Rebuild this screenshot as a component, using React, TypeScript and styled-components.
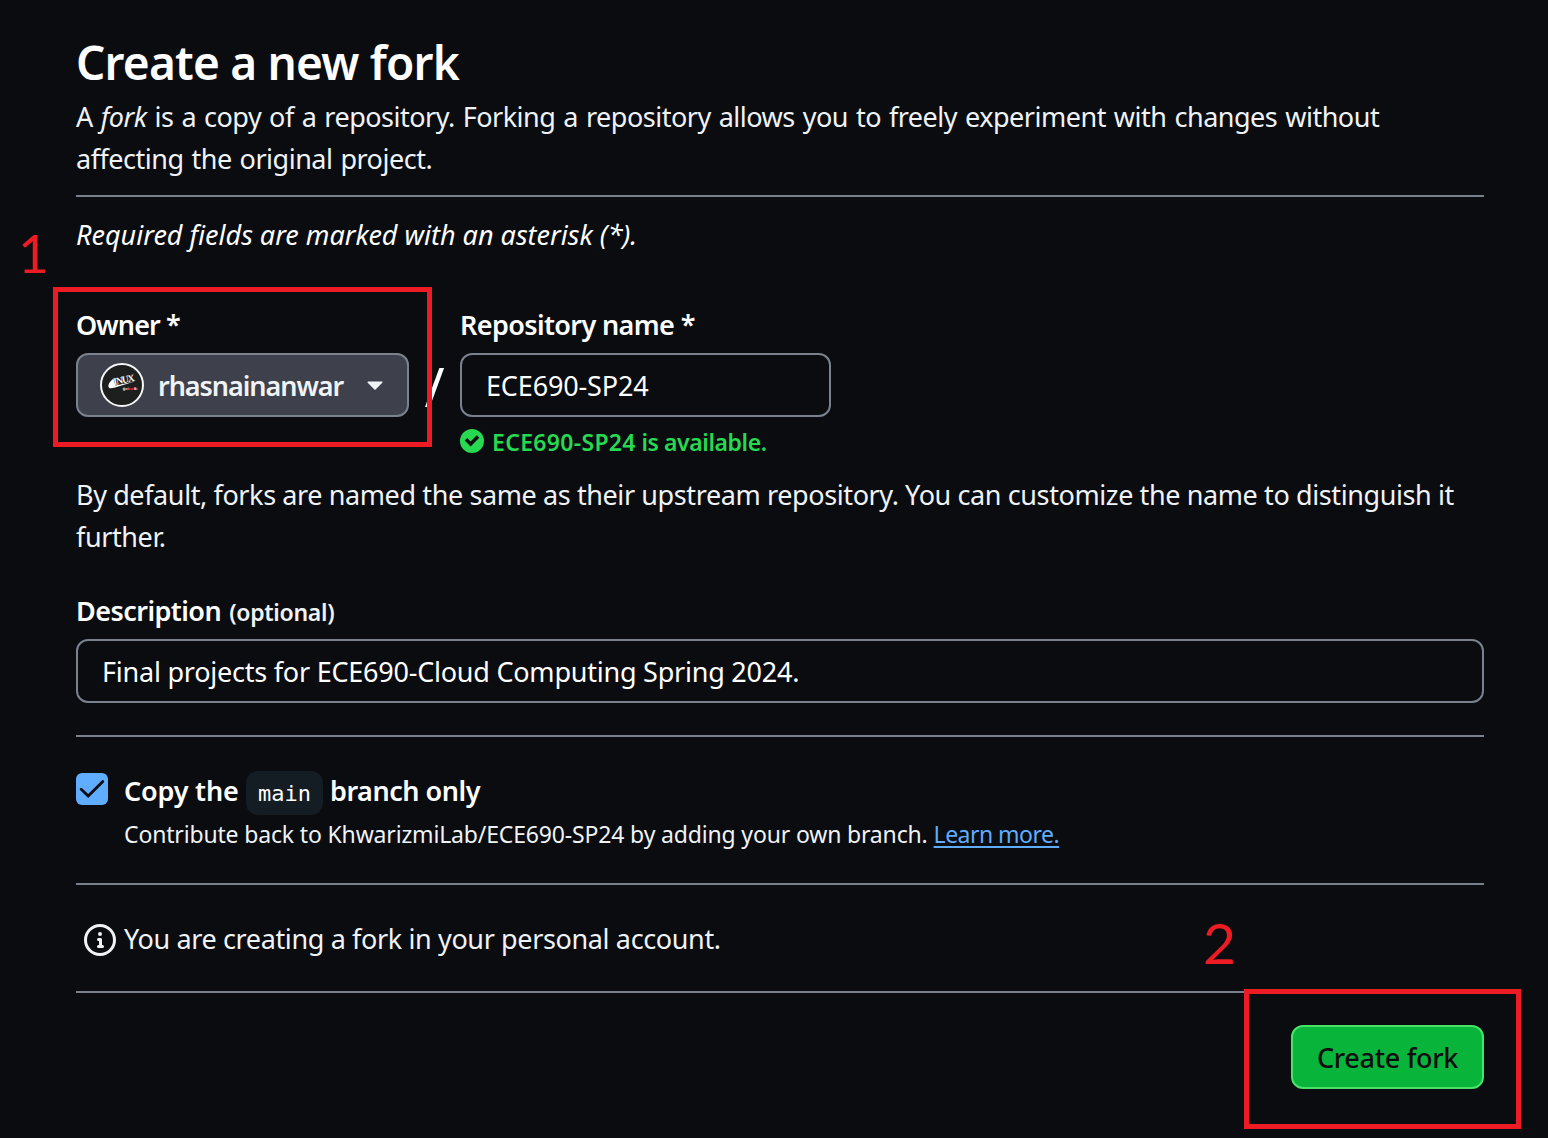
import React from 'react';
import styled, { createGlobalStyle } from 'styled-components';

const color = {
  canvas: '#0a0c10',
  text: '#f0f3f6',
  strong: '#ffffff',
  border: '#7a828e',
  owner: '#3e414b',
  success: '#26d950',
  primary: '#09b43a',
  primaryBorder: '#4ae168',
  link: '#60adff',
  code: '#141c24',
  mark: '#ed1c24',
};

const GlobalStyle = createGlobalStyle`
  *, *::before, *::after { box-sizing: border-box; }
  body {
    margin: 0;
    background: ${color.canvas};
    color: ${color.text};
    font-family: 'Noto Sans', 'Open Sans', sans-serif;
  }
`;

const Page = styled.main`
  position: relative;
  width: 1548px;
  height: 1138px;
  padding: 27px 64px 0 76px;
  overflow: hidden;
  background: ${color.canvas};
`;

const Title = styled.h1`
  margin: 0;
  font-size: 46px;
  font-weight: 600;
  line-height: 70px;
  letter-spacing: -0.8px;
  color: ${color.strong};
`;

const Paragraph = styled.p<{ $track?: number; $word?: number; $top?: number }>`
  margin: ${(p) => p.$top ?? 0}px 0 0;
  font-size: 27px;
  line-height: 42px;
  letter-spacing: ${(p) => p.$track ?? 0}px;
  word-spacing: ${(p) => p.$word ?? 0}px;
`;

const RequiredNote = styled(Paragraph)`
  font-style: italic;
  color: ${color.strong};
`;

const Divider = styled.hr<{ $top: number; $bottom: number }>`
  height: 2px;
  margin: ${(p) => p.$top}px 0 ${(p) => p.$bottom}px;
  border: 0;
  background: ${color.border};
`;

const FieldRow = styled.div`
  display: flex;
  align-items: flex-start;
  margin-top: 48px;
`;

const Field = styled.div<{ $width?: number; $top?: number }>`
  display: flex;
  flex-direction: column;
  width: ${(p) => (p.$width ? `${p.$width}px` : '100%')};
  margin-top: ${(p) => p.$top ?? 0}px;
`;

const Label = styled.label<{ $track: number; $gap?: number }>`
  display: flex;
  align-items: baseline;
  gap: 8px;
  margin-bottom: ${(p) => p.$gap ?? 7}px;
  font-size: 27px;
  font-weight: 600;
  line-height: 42px;
  letter-spacing: ${(p) => p.$track}px;
  white-space: nowrap;
  color: ${color.strong};
`;

const Optional = styled.span`
  font-size: 23px;
  letter-spacing: -0.3px;
  color: ${color.text};
`;

const OwnerButton = styled.button`
  display: flex;
  align-items: center;
  width: 333px;
  height: 64px;
  padding: 0 24px 0 22px;
  border: 2px solid ${color.border};
  border-radius: 12px;
  background: ${color.owner};
  color: ${color.text};
  font: 600 27px 'Noto Sans', 'Open Sans', sans-serif;
  letter-spacing: -1.05px;
`;

const OwnerName = styled.span`
  flex: 1;
  margin-left: 14px;
  text-align: left;
`;

const Separator = styled.span`
  display: flex;
  align-items: center;
  justify-content: center;
  width: 51px;
  height: 64px;
  margin-top: 50px;
  font-size: 54px;
  line-height: 64px;
  color: ${color.strong};
`;

const TextInput = styled.input<{ $track: number }>`
  width: 100%;
  height: 64px;
  padding: 0 22px 0 24px;
  border: 2px solid ${color.border};
  border-radius: 12px;
  outline: none;
  background: ${color.canvas};
  color: ${color.strong};
  font: 400 27px 'Noto Sans', 'Open Sans', sans-serif;
  letter-spacing: ${(p) => p.$track}px;
`;

const Availability = styled.div`
  display: flex;
  align-items: center;
  gap: 8px;
  height: 36px;
  margin-top: 7px;
  font-size: 23px;
  font-weight: 600;
  line-height: 36px;
  letter-spacing: -0.4px;
  white-space: nowrap;
  color: ${color.success};

  svg {
    position: relative;
    top: -1px;
  }
`;

const AvailableName = styled.span`
  letter-spacing: 0.32px;
`;

const BranchOption = styled.div`
  display: flex;
  gap: 16px;
  height: 146px;
  padding-top: 32px;
`;

const Checkbox = styled.span`
  display: flex;
  width: 32px;
  height: 32px;
  margin-top: 4px;
  border-radius: 6px;
  background: ${color.link};
`;

const BranchTitle = styled.div`
  display: flex;
  height: 47px;
  font-size: 27px;
  font-weight: 600;
  line-height: 43px;
  white-space: nowrap;
  color: ${color.strong};
`;

const BranchWords = styled.span<{ $track: number; $width?: number }>`
  width: ${(p) => (p.$width ? `${p.$width}px` : 'auto')};
  letter-spacing: ${(p) => p.$track}px;
`;

const BranchName = styled.code`
  width: 77px;
  height: 44px;
  margin: 2px 7px 0 0;
  border-radius: 12px;
  background: ${color.code};
  font: 400 22px/45px 'DejaVu Sans Mono', monospace;
  text-align: center;
`;

const BranchHint = styled.div`
  display: flex;
  gap: 6px;
  font-size: 23px;
  line-height: 36px;
  letter-spacing: -0.16px;
  white-space: nowrap;
`;

const Link = styled.a`
  color: ${color.link};
  letter-spacing: -0.52px;
  text-decoration: underline;
  text-decoration-thickness: 2px;
  text-underline-offset: 3px;
`;

const AccountNote = styled.div`
  display: flex;
  align-items: center;
  gap: 8px;
  height: 42px;
  padding-left: 8px;
  margin-top: 34px;
  font-size: 27px;
  line-height: 42px;
  letter-spacing: -0.37px;
  white-space: nowrap;
`;

const NoteText = styled.span`
  height: 44px;
`;

const Actions = styled.div`
  display: flex;
  justify-content: flex-end;
`;

const CreateButton = styled.button`
  width: 193px;
  height: 64px;
  padding: 0;
  border: 2px solid ${color.primaryBorder};
  border-radius: 12px;
  background: ${color.primary};
  color: ${color.canvas};
  font: 500 27px 'Noto Sans', 'Open Sans', sans-serif;
  letter-spacing: -0.3px;
`;

const Highlight = styled.div<{ $x: number; $y: number; $w: number; $h: number }>`
  position: absolute;
  left: ${(p) => p.$x}px;
  top: ${(p) => p.$y}px;
  width: ${(p) => p.$w}px;
  height: ${(p) => p.$h}px;
  border: 5px solid ${color.mark};
`;

const Step = styled.span<{ $x: number; $y: number; $size: number }>`
  position: absolute;
  left: ${(p) => p.$x}px;
  top: ${(p) => p.$y}px;
  font: 400 ${(p) => p.$size}px/60px Lato, sans-serif;
  color: ${color.mark};
`;

const Avatar = () => (
  <svg width="44" height="44" viewBox="0 0 44 44" aria-hidden="true">
    <circle cx="22" cy="22" r="21" fill="#1c1f1d" stroke="#f4f6f8" strokeWidth="2" />
    <path d="M13.4 15.8c-2.8 2-5.5 5.4-4.9 8 .5 2 3 1.8 6.5.7L34.6 18.6 15.4 22.4z" fill="#fff" />
    <text
      x="14"
      y="22"
      transform="rotate(-11 14 22)"
      fill="#fff"
      fontFamily="'Liberation Serif', serif"
      fontWeight="700"
      fontSize="10"
      textLength="20.5"
      lengthAdjust="spacingAndGlyphs"
    >
      INUX
    </text>
    <text
      x="23"
      y="26.8"
      fill="#b9bcbd"
      fontFamily="'Liberation Sans', sans-serif"
      fontWeight="700"
      fontSize="3"
      textLength="12"
      lengthAdjust="spacingAndGlyphs"
    >
      just <tspan fill="#d3202f">sudo</tspan> it
    </text>
  </svg>
);

const Caret = () => (
  <svg width="16" height="9" viewBox="0 0 16 9" aria-hidden="true">
    <path d="M1.2 0.5h13.6c.7 0 1 .7.5 1.2L8.6 8.4a.8.8 0 0 1-1.2 0L.7 1.7C.2 1.2.5.5 1.2.5Z" fill={color.text} />
  </svg>
);

const CheckMark = () => (
  <svg width="32" height="32" viewBox="0 0 32 32" aria-hidden="true">
    <path d="M5.2 16.2 12.2 23 26.8 8.4" fill="none" stroke={color.canvas} strokeWidth="2.8" strokeLinecap="round" />
  </svg>
);

const CheckCircle = () => (
  <svg width="24" height="24" viewBox="0 0 12 12" fill="currentColor" aria-hidden="true">
    <path d="M6 0a6 6 0 1 1 0 12A6 6 0 0 1 6 0Zm-.705 8.737L9.63 4.403 8.392 3.166 5.295 6.263l-1.7-1.702L2.356 5.8l2.938 2.938Z" />
  </svg>
);

const Info = () => (
  <svg width="32" height="32" viewBox="0 0 16 16" fill="currentColor" aria-hidden="true">
    <path d="M0 8a8 8 0 1 1 16 0A8 8 0 0 1 0 8Zm8-6.5a6.5 6.5 0 1 0 0 13 6.5 6.5 0 0 0 0-13ZM6.5 7.75A.75.75 0 0 1 7.25 7h1a.75.75 0 0 1 .75.75v2.75h.25a.75.75 0 0 1 0 1.5h-2a.75.75 0 0 1 0-1.5h.25v-2h-.25a.75.75 0 0 1-.75-.75ZM8 6a1 1 0 1 1 0-2 1 1 0 0 1 0 2Z" />
  </svg>
);

export default function App() {
  return (
    <>
      <GlobalStyle />
      <Page>
        <Title>Create a new fork</Title>
        <Paragraph $top={-1} $track={-0.49} $word={1.4}>
          A <em>fork</em> is a copy of a repository. Forking a repository allows you to freely experiment with changes
          without affecting the original project.
        </Paragraph>
        <Divider $top={15} $bottom={17} />
        <RequiredNote>Required fields are marked with an asterisk (*).</RequiredNote>

        <FieldRow>
          <Field $width={333}>
            <Label $track={-0.9}>Owner *</Label>
            <OwnerButton type="button">
              <Avatar />
              <OwnerName>rhasnainanwar</OwnerName>
              <Caret />
            </OwnerButton>
          </Field>
          <Separator>/</Separator>
          <Field $width={371}>
            <Label $track={-0.62}>Repository name *</Label>
            <TextInput $track={-0.15} defaultValue="ECE690-SP24" />
            <Availability>
              <CheckCircle />
              <span>
                <AvailableName>ECE690-SP24</AvailableName> is available.
              </span>
            </Availability>
          </Field>
        </FieldRow>

        <Paragraph $top={14} $track={-0.395}>
          By default, forks are named the same as their upstream repository. You can customize the name to distinguish it
          further.
        </Paragraph>

        <Field $top={32}>
          <Label $track={-0.55} $gap={6}>
            Description <Optional>(optional)</Optional>
          </Label>
          <TextInput $track={-0.23} defaultValue="Final projects for ECE690-Cloud Computing Spring 2024." />
        </Field>
        <Divider $top={32} $bottom={0} />

        <BranchOption>
          <Checkbox role="checkbox" aria-checked="true">
            <CheckMark />
          </Checkbox>
          <div>
            <BranchTitle>
              <BranchWords $track={-0.19} $width={122}>Copy the</BranchWords>
              <BranchName>main</BranchName>
              <BranchWords $track={-0.48}>branch only</BranchWords>
            </BranchTitle>
            <BranchHint>
              <span>Contribute back to KhwarizmiLab/ECE690-SP24 by adding your own branch.</span>
              <Link>Learn more.</Link>
            </BranchHint>
          </div>
        </BranchOption>
        <Divider $top={0} $bottom={0} />

        <AccountNote>
          <Info />
          <NoteText>You are creating a fork in your personal account.</NoteText>
        </AccountNote>
        <Divider $top={30} $bottom={32} />

        <Actions>
          <CreateButton type="button">Create fork</CreateButton>
        </Actions>

        <Step $x={18} $y={223} $size={53}>1</Step>
        <Step $x={1203} $y={912} $size={57}>2</Step>
        <Highlight $x={53} $y={287} $w={379} $h={160} />
        <Highlight $x={1244} $y={989} $w={277} $h={140} />
      </Page>
    </>
  );
}
